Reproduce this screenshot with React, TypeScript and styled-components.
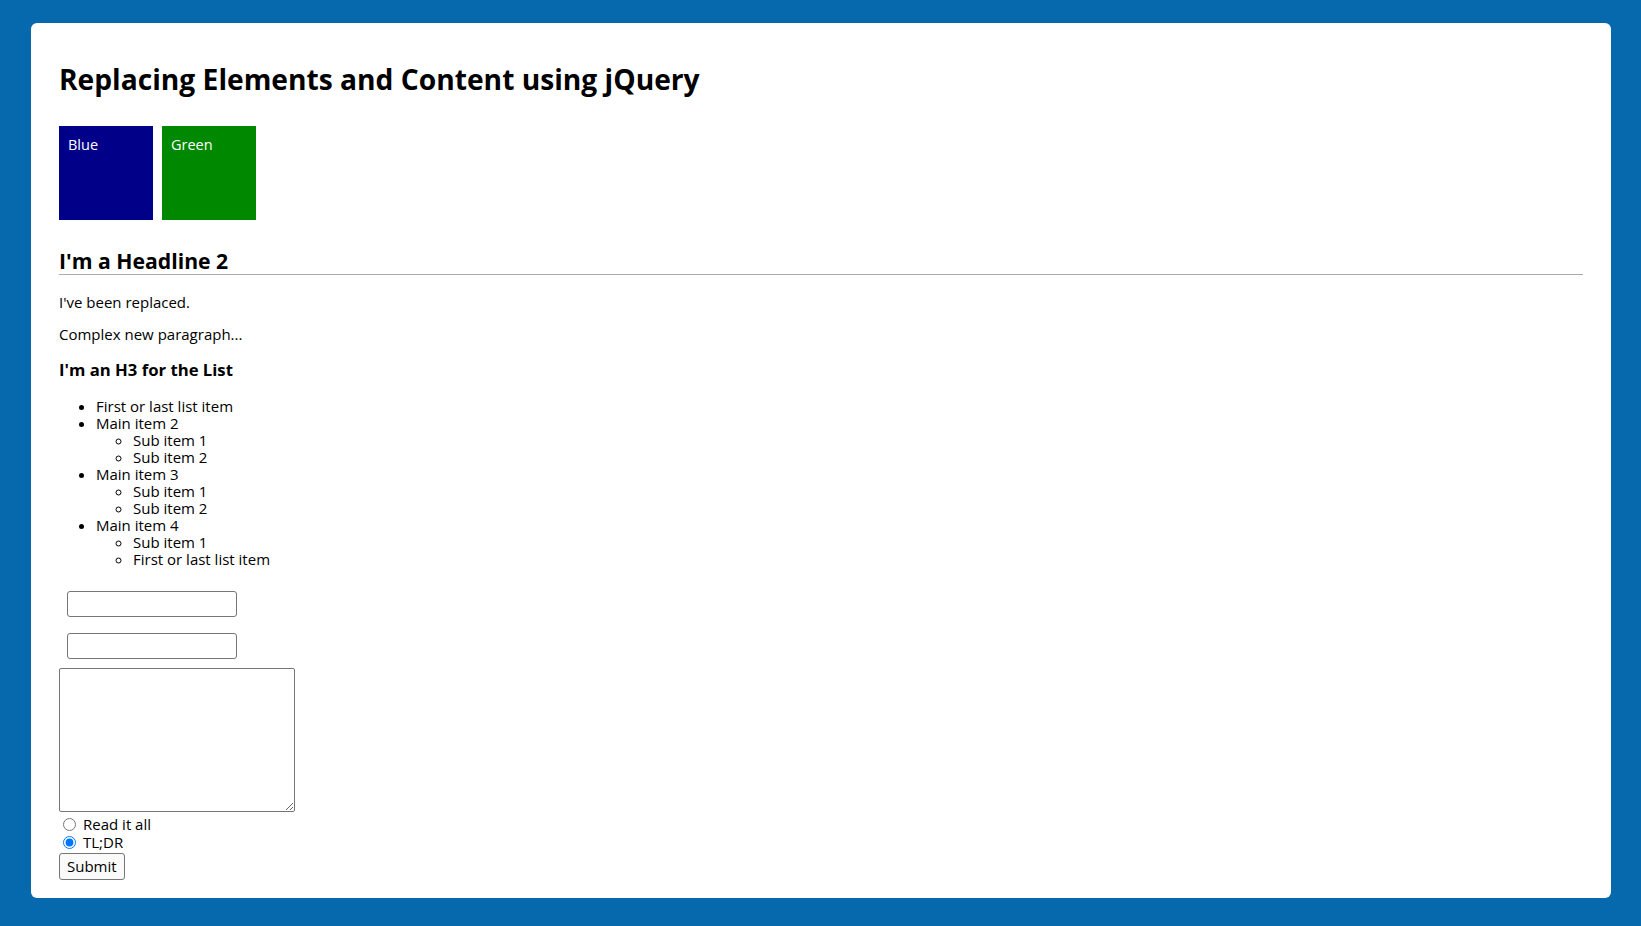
import styled, { createGlobalStyle } from 'styled-components';

const GlobalStyle = createGlobalStyle`
	html, body {
		margin: 0;
		padding: 0;
		background: #0769ad;
	}
	body {
		font-family: 'Trebuchet MS', 'Open Sans', 'Liberation Sans', sans-serif;
		font-size: 15px;
		line-height: 17px;
		color: #000;
	}
`;

const Page = styled.div`
	padding: 23px 30px 28px 31px;
`;

const Card = styled.main`
	background: #fff;
	border-radius: 6px;
	padding: 40px 28px 18px 28px;
`;

const Title = styled.h1`
	margin: 0 0 31px;
	font-size: 28.2px;
	line-height: 32px;
	font-weight: bold;
`;

const Boxes = styled.div`
	display: flex;
	gap: 9px;
`;

const Box = styled.div<{ color: string }>`
	width: 94px;
	height: 94px;
	box-sizing: border-box;
	padding: 10px 9px;
	background: ${(p) => p.color};
	color: #fff;
	font-size: 14.5px;
`;

const Headline = styled.h2`
	margin: 28px 0 19px;
	font-size: 21.2px;
	line-height: 26px;
	font-weight: bold;
	border-bottom: 1px solid #aaa;
`;

const Para = styled.p`
	margin: 0 0 15px;
`;

const ListTitle = styled.h3`
	margin: 17px 0 18px;
	font-size: 16.7px;
	line-height: 20px;
	font-weight: bold;
`;

const List = styled.ul<{ sub?: boolean }>`
	margin: 0;
	padding-left: 37px;
	list-style: ${(p) => (p.sub ? 'circle' : 'disc')};
`;

const Form = styled.form`
	margin-top: 23px;
	display: flex;
	flex-direction: column;
	align-items: flex-start;
`;

const TextInput = styled.input`
	width: 170px;
	height: 26px;
	box-sizing: border-box;
	margin: 0 0 16px 8px;
	border: 1px solid #767676;
	border-radius: 3px;
	font: inherit;
`;

const Notes = styled.textarea`
	width: 236px;
	height: 144px;
	box-sizing: border-box;
	margin: -7px 0 4px 0;
	border: 1px solid #767676;
	border-radius: 2px;
	font: inherit;
`;

const RadioRow = styled.label`
	display: flex;
	align-items: center;
	height: 17.5px;

	input {
		margin: 0 7px 0 4px;
		width: 13px;
		height: 13px;
	}
`;

const Submit = styled.button`
	margin-top: 2px;
	height: 27px;
	padding: 0 7px;
	font: inherit;
	background: #fafafa;
	border: 1px solid #767676;
	border-radius: 3px;
	color: #000;
`;

export default function App() {
	return (
		<>
			<GlobalStyle />
			<Page>
				<Card>
					<Title>Replacing Elements and Content using jQuery</Title>
					<Boxes>
						<Box color="#000088">Blue</Box>
						<Box color="#008800">Green</Box>
					</Boxes>
					<Headline>I'm a Headline 2</Headline>
					<Para>I've been replaced.</Para>
					<Para>Complex new paragraph...</Para>
					<ListTitle>I'm an H3 for the List</ListTitle>
					<List>
						<li>First or last list item</li>
						<li>
							Main item 2
							<List sub>
								<li>Sub item 1</li>
								<li>Sub item 2</li>
							</List>
						</li>
						<li>
							Main item 3
							<List sub>
								<li>Sub item 1</li>
								<li>Sub item 2</li>
							</List>
						</li>
						<li>
							Main item 4
							<List sub>
								<li>Sub item 1</li>
								<li>First or last list item</li>
							</List>
						</li>
					</List>
					<Form onSubmit={(e) => e.preventDefault()}>
						<TextInput type="text" />
						<TextInput type="text" />
						<Notes />
						<RadioRow>
							<input type="radio" name="length" value="all" />
							Read it all
						</RadioRow>
						<RadioRow>
							<input type="radio" name="length" value="tldr" defaultChecked />
							TL;DR
						</RadioRow>
						<Submit type="submit">Submit</Submit>
					</Form>
				</Card>
			</Page>
		</>
	);
}
